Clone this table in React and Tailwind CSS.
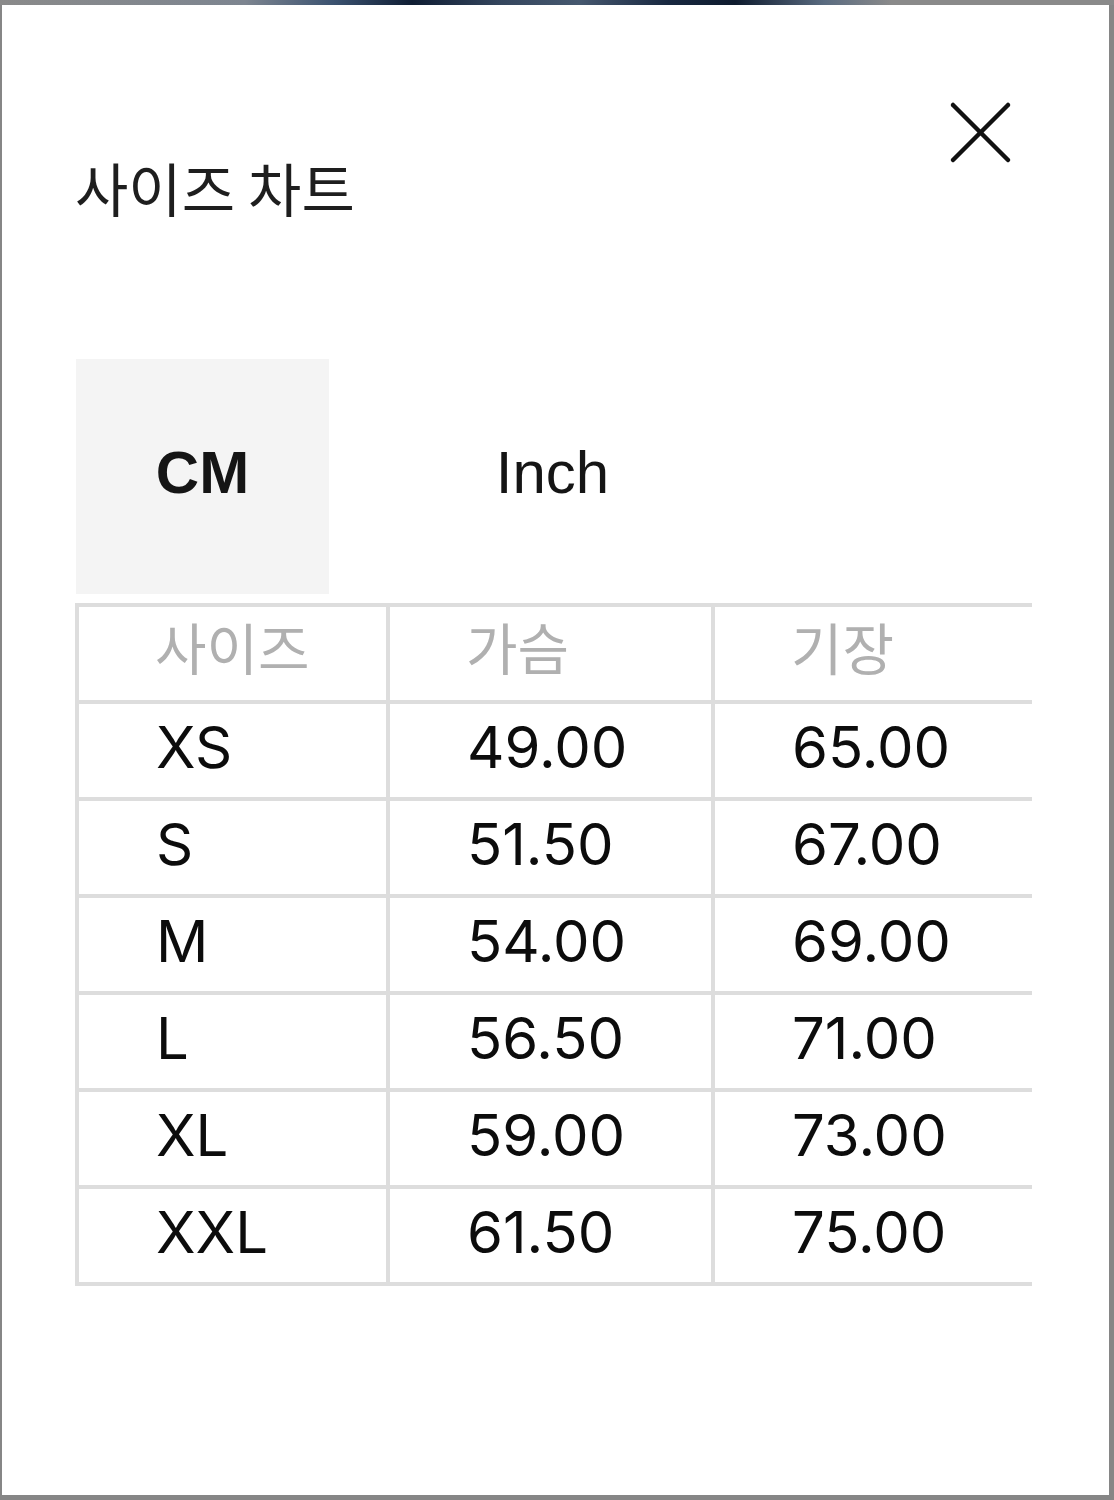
import React from "react";

const rows = [
  ["XS", "49.00", "65.00"],
  ["S", "51.50", "67.00"],
  ["M", "54.00", "69.00"],
  ["L", "56.50", "71.00"],
  ["XL", "59.00", "73.00"],
  ["XXL", "61.50", "75.00"],
];

const kr = { fontFamily: '"Noto Sans CJK KR", "Noto Sans", sans-serif' };
const latin = { fontFamily: '"Liberation Sans", Arial, sans-serif' };
const num = { fontFamily: 'Inter, "Liberation Sans", sans-serif' };

export default function App() {
  return (
    <div className="w-[1114px] h-[1500px] bg-[#868686] flex flex-col">
      <div className="h-[5px] w-full bg-[linear-gradient(90deg,#8a8a8a_0%,#7d8590_22%,#3b5270_30%,#0f1d33_37%,#35465e_45%,#46586f_52%,#182840_60%,#0e1b2e_66%,#5a6b80_74%,#8a8a8a_80%,#8a8a8a_100%)]" />
      <div className="flex-1 ml-[2px] mr-[5px] mb-[5px] bg-white flex flex-col px-[73px]">
        <div className="flex justify-between items-start pt-[93px]">
          <h1
            className="mt-[60px] text-[58px] leading-[58px] text-[#1e1e1e] font-normal"
            style={kr}
          >
            사이즈 차트
          </h1>
          <svg
            width="66"
            height="66"
            viewBox="0 0 66 66"
            className="mr-[24px]"
            fill="none"
            stroke="#111"
            strokeWidth="4.5"
            strokeLinecap="round"
          >
            <line x1="7" y1="7" x2="62" y2="62" />
            <line x1="62" y1="7" x2="7" y2="62" />
          </svg>
        </div>

        <div className="flex mt-[143px] ml-[1px] gap-[97px]">
          <div
            className="w-[253px] h-[235px] bg-[#f4f4f4] flex items-center justify-center pb-[8px] text-[60px] font-bold text-[#151515]"
            style={latin}
          >
            CM
          </div>
          <div
            className="w-[253px] h-[235px] flex items-center justify-center pb-[8px] text-[60px] text-[#151515]"
            style={latin}
          >
            Inch
          </div>
        </div>

        <div className="mt-[9px] w-[957px] bg-[#dddddd] pl-[4px] py-[4px] grid grid-cols-[307px_321px_317px] auto-rows-[93px] gap-[4px]">
          {["사이즈", "가슴", "기장"].map((h) => (
            <div
              key={h}
              className="bg-white flex items-center pl-[76px] pb-[16px] text-[56px] leading-none text-[#b0b0b0]"
              style={kr}
            >
              {h}
            </div>
          ))}
          {rows.map((r) =>
            r.map((c, i) => (
              <div
                key={r[0] + i}
                className="bg-white flex items-center pl-[77px] pb-[8px] text-[58px] leading-none text-[#0c0c0c]"
                style={num}
              >
                {c}
              </div>
            ))
          )}
        </div>
      </div>
    </div>
  );
}
